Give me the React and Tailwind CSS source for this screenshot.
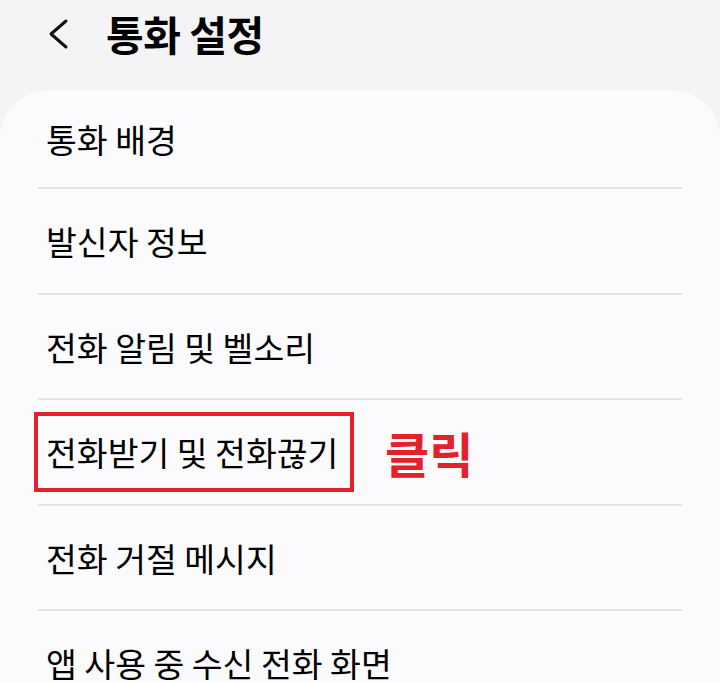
import React from "react";

const rows = [
  "통화 배경",
  "발신자 정보",
  "전화 알림 및 벨소리",
  "전화받기 및 전화끊기",
  "전화 거절 메시지",
  "앱 사용 중 수신 전화 화면",
];

export default function App() {
  return (
    <div
      className="h-[683px] w-[720px] overflow-hidden bg-[#f4f4f6] text-black"
      style={{ fontFamily: '"Noto Sans CJK KR", "Noto Sans", sans-serif' }}
    >
      {/* header */}
      <div className="flex h-[90px] items-start pt-[9px]">
        <svg className="ml-[46px] mt-[9px] h-[32px] w-[24px]" viewBox="0 0 24 32" fill="none">
          <path d="M20 3 L5 16 L20 29" stroke="#111" strokeWidth="3" strokeLinecap="round" strokeLinejoin="round" />
        </svg>
        <h1 className="ml-[36px] text-[41px] font-bold leading-[48px] tracking-[-0.5px]">통화 설정</h1>
      </div>

      {/* card */}
      <div className="rounded-t-[48px] bg-[#fbfbfd]">
        {rows.map((label, i) => (
          <div key={label}>
            {i > 0 && <div className="mx-[38px] h-[2px] bg-[#e3e3e6]" />}
            <div className={`flex items-center px-[46px] ${i === 0 ? "h-[97px]" : "h-[103.5px]"}`}>
              {i === 3 ? (
                <>
                  <div className="-ml-[12px] flex h-[80px] w-[320px] shrink-0 items-center border-[4px] border-[#e3212b] pl-[8px]">
                    <span className="whitespace-nowrap text-[33.5px] leading-none">{label}</span>
                  </div>
                  <span className="ml-[31px] text-[48px] font-bold leading-none text-[#e3212b]">클릭</span>
                </>
              ) : (
                <span className="whitespace-nowrap text-[33.5px] leading-none">{label}</span>
              )}
            </div>
          </div>
        ))}
      </div>
    </div>
  );
}
